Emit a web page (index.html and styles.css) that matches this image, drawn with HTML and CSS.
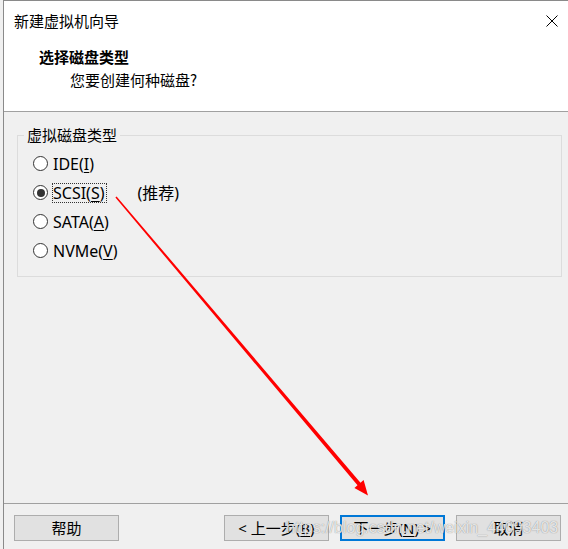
FILE: index.html
```html
<!DOCTYPE html>
<html lang="zh-CN">
<head>
<meta charset="utf-8">
<title>新建虚拟机向导</title>
<link rel="stylesheet" href="styles.css">
</head>
<body>
<div class="window">
  <div class="titlebar">
    <span class="title">新建虚拟机向导</span>
    <svg class="close" width="12" height="12" viewBox="0 0 12 12"><path d="M0.5 0.5 L11.5 11.5 M11.5 0.5 L0.5 11.5" stroke="#000" stroke-width="1" fill="none"/></svg>
  </div>
  <div class="header">
    <div class="h-title">选择磁盘类型</div>
    <div class="h-sub">您要创建何种磁盘?</div>
  </div>
  <div class="content">
    <div class="group">
      <div class="legend">虚拟磁盘类型</div>
      <div class="options">
        <div class="opt"><span class="radio"></span><span class="label">IDE(<u>I</u>)</span></div>
        <div class="opt"><span class="radio checked"></span><span class="label focus">SCSI(<u>S</u>)</span><span class="rec">(推荐)</span></div>
        <div class="opt"><span class="radio"></span><span class="label">SATA(<u>A</u>)</span></div>
        <div class="opt"><span class="radio"></span><span class="label">NVMe(<u>V</u>)</span></div>
      </div>
    </div>
  </div>
  <div class="footer">
    <button class="btn">帮助</button>
    <button class="btn prev">&lt; 上一步(<u>B</u>)</button>
    <button class="btn next">下一步(<u>N</u>) &gt;</button>
    <button class="btn cancel">取消</button>
  </div>
</div>
<div class="watermark">https://blog.csdn.net/weixin_44093403</div>
<svg class="arrow" width="568" height="549" viewBox="0 0 568 549">
  <polygon fill="#ff0000" points="116.6,196.4 115.4,197.6 357.5,485.3 354.4,487.9 368,495.5 363.6,480.1 360.5,482.7"/>
</svg>
</body>
</html>
```
FILE: styles.css
```css
html, body {
  margin: 0;
  padding: 0;
}
body {
  width: 568px;
  height: 549px;
  overflow: hidden;
  position: relative;
  background: #f0f0f0;
  font-family: "Noto Sans", "Noto Sans CJK SC", sans-serif;
  font-size: 15px;
  color: #000;
}
.window {
  margin-left: 3px;
  width: 570px;
  border-left: 1px solid #8a8a8a;
  border-top: 1px solid #8a8a8a;
  background: #f0f0f0;
}
.titlebar {
  height: 40px;
  background: #fff;
  display: flex;
  align-items: center;
  justify-content: space-between;
  padding: 0 16px 0 10px;
}
.title {
  line-height: 20px;
  font-family: "Noto Sans CJK SC", sans-serif;
}
.close {
  display: block;
}
.header {
  box-sizing: border-box;
  background: #fff;
  padding: 6px 0 0 35px;
  border-bottom: 1px solid #a0a0a0;
  height: 71px;
}
.h-title {
  font-weight: bold;
  line-height: 20px;
  font-family: "Noto Sans CJK SC", sans-serif;
}
.h-sub {
  margin: 3px 0 0 31px;
  line-height: 20px;
  font-family: "Noto Sans CJK SC", sans-serif;
}
.content {
  height: 391px;
  padding-top: 23px;
  box-sizing: border-box;
}
.group {
  margin-left: 13px;
  width: 545px;
  height: 142px;
  box-sizing: border-box;
  border: 1px solid #dcdcdc;
}
.legend {
  width: max-content;
  margin: -11px 0 0 6px;
  padding: 0 3px;
  line-height: 20px;
  background: #f0f0f0;
  font-family: "Noto Sans CJK SC", sans-serif;
}
.options {
  margin-top: 4px;
  padding-left: 15px;
}
.opt {
  height: 29px;
  display: flex;
  align-items: center;
}
.radio {
  width: 15px;
  height: 15px;
  box-sizing: border-box;
  border: 1px solid #333;
  border-radius: 50%;
  background: #fff;
  display: flex;
  align-items: center;
  justify-content: center;
  margin-right: 4px;
}
.radio.checked::after {
  content: "";
  width: 8px;
  height: 8px;
  border-radius: 50%;
  background: #333;
}
.label {
  font-size: 16px;
  line-height: 18px;
  border: 1px dotted transparent;
  padding: 0 1px 0 0;
}
.label.focus {
  border-color: #333;
}
.label u, .btn u {
  text-decoration-thickness: 1px;
  text-underline-offset: 2px;
}
.rec {
  margin-left: 31px;
  font-size: 16px;
  line-height: 20px;
}
.footer {
  height: 60px;
  box-sizing: border-box;
  border-top: 1px solid #a0a0a0;
  padding: 11px 0 0 10px;
  display: flex;
  align-items: flex-start;
}
.btn {
  width: 105px;
  height: 26px;
  box-sizing: border-box;
  margin: 0;
  padding: 0;
  background: #e1e1e1;
  border: 1px solid #adadad;
  border-radius: 0;
  font-family: "Noto Sans", "Noto Sans CJK SC", sans-serif;
  font-size: 15px;
  line-height: 20px;
  color: #000;
}
.prev {
  margin-left: 105px;
}
.next {
  margin-left: 11px;
  border: 2px solid #0078d7;
}
.cancel {
  margin-left: 11px;
}
.watermark {
  position: absolute;
  left: 286px;
  top: 518px;
  font-family: "Liberation Sans", sans-serif;
  font-size: 16px;
  line-height: 20px;
  color: rgba(255, 255, 255, 0.8);
  text-shadow: 0 0 1px rgba(90, 90, 90, 0.8);
  white-space: nowrap;
}
.arrow {
  position: absolute;
  left: 0;
  top: 0;
  pointer-events: none;
}
```
